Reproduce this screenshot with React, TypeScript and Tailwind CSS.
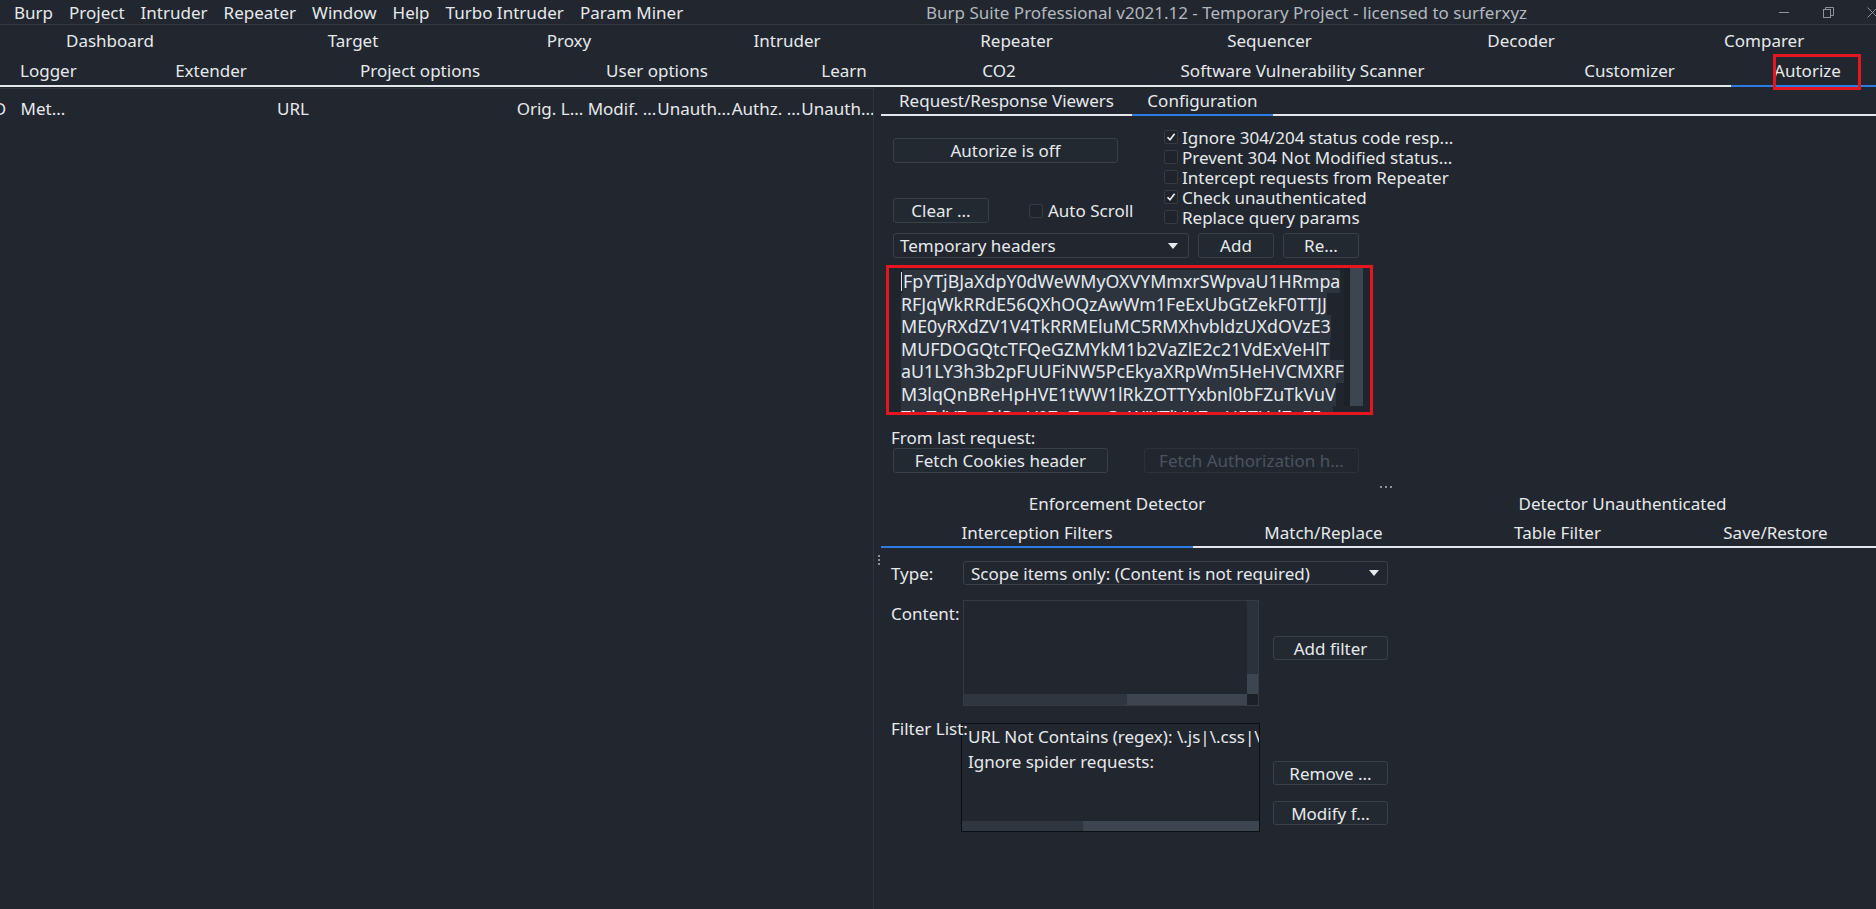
const menus = ["Burp", "Project", "Intruder", "Repeater", "Window", "Help", "Turbo Intruder", "Param Miner"];

const tabsTop = [
  { label: "Dashboard", w: "w-[220px] justify-center" },
  { label: "Target", w: "w-[266px] justify-center" },
  { label: "Proxy", w: "w-[166px] justify-center" },
  { label: "Intruder", w: "w-[270px] justify-center" },
  { label: "Repeater", w: "w-[189px] justify-center" },
  { label: "Sequencer", w: "w-[317px] justify-center" },
  { label: "Decoder", w: "w-[186px] justify-center" },
  { label: "Comparer", w: "flex-1 pl-[110px]" },
];

const tabsBottom = [
  { label: "Logger", w: "w-[129px]" },
  { label: "Extender", w: "w-[164px]" },
  { label: "Project options", w: "w-[254px]" },
  { label: "User options", w: "w-[220px]" },
  { label: "Learn", w: "w-[154px]" },
  { label: "CO2", w: "w-[156px]" },
  { label: "Software Vulnerability Scanner", w: "w-[451px]" },
  { label: "Customizer", w: "w-[203px]" },
];

const columns = [
  { label: "Met...", w: "w-[58px]" },
  { label: "URL", w: "w-[442px]" },
  { label: "Orig. L...", w: "w-[72px]" },
  { label: "Modif. ...", w: "w-[72px]" },
  { label: "Unauth...", w: "w-[72px]" },
  { label: "Authz. ...", w: "w-[72px]" },
  { label: "Unauth...", w: "w-[72px]" },
];

const options = [
  { label: "Ignore 304/204 status code resp...", checked: true },
  { label: "Prevent 304 Not Modified status...", checked: false },
  { label: "Intercept requests from Repeater", checked: false },
  { label: "Check unauthenticated", checked: true },
  { label: "Replace query params", checked: false },
];

const headerLines = [
  "FpYTjBJaXdpY0dWeWMyOXVYMmxrSWpvaU1HRmpa",
  "RFJqWkRRdE56QXhOQzAwWm1FeExUbGtZekF0TTJJ",
  "ME0yRXdZV1V4TkRRMEluMC5RMXhvbldzUXdOVzE3",
  "MUFDOGQtcTFQeGZMYkM1b2VaZlE2c21VdExVeHlT",
  "aU1LY3h3b2pFUUFiNW5PcEkyaXRpWm5HeHVCMXRF",
  "M3lqQnBReHpHVE1tWW1lRkZOTTYxbnl0bFZuTkVuV",
  "TlpTdVZmQlRwV0ZoTmpGaWJYTjVHZmU5TUdZeE5p",
];

const Btn = ({
  children,
  className = "",
  disabled = false,
}: {
  children: React.ReactNode;
  className?: string;
  disabled?: boolean;
}) => (
  <div
    className={`flex shrink-0 items-center justify-center rounded-[3px] border whitespace-nowrap ${
      disabled
        ? "border-[#2c323b] text-[#4b5361]"
        : "border-[#3a4049] bg-[#232931] text-[#e6e9ec]"
    } ${className}`}
  >
    {children}
  </div>
);

const CheckBox = ({ checked }: { checked: boolean }) => (
  <div className="flex h-[14px] w-[14px] shrink-0 items-center justify-center rounded-[2px] border border-[#363c45] bg-[#1f242b]">
    {checked && (
      <svg width="10" height="10" viewBox="0 0 10 10">
        <path d="M1.5 5.2 L4 7.8 L8.6 1.8" fill="none" stroke="#eef1f4" strokeWidth="1.6" />
      </svg>
    )}
  </div>
);

const Arrow = () => (
  <svg width="10" height="6" viewBox="0 0 10 6">
    <path d="M0 0 H10 L5 6 Z" fill="#e8ebee" />
  </svg>
);

export default function App() {
  return (
    <div className="flex h-[909px] w-[1876px] flex-col overflow-hidden bg-[#22272f] font-['Noto_Sans',sans-serif] text-[17px] leading-none text-[#e6e9ec]">
      {/* menu + title bar */}
      <div className="flex h-[25px] shrink-0 items-center border-b border-[#343a43]">
        <div className="flex pl-[6px]">
          {menus.map((m) => (
            <div key={m} className="px-[8px] whitespace-nowrap">
              {m}
            </div>
          ))}
        </div>
        <div className="flex-1 text-center whitespace-nowrap text-[#b3b8bf]">
          Burp Suite Professional v2021.12 - Temporary Project - licensed to surferxyz
        </div>
        <div className="mr-[-18px] flex h-full shrink-0">
          <div className="flex w-[44px] items-center justify-center">
            <div className="h-px w-[10px] bg-[#8d939b]" />
          </div>
          <div className="flex w-[44px] items-center justify-center">
            <svg width="11" height="11" viewBox="0 0 11 11">
              <rect x="0.5" y="2.5" width="7" height="8" fill="none" stroke="#8d939b" />
              <path d="M2.5 2.5 V0.5 H10.5 V8.5 H7.5" fill="none" stroke="#8d939b" />
            </svg>
          </div>
          <div className="flex w-[44px] items-center justify-center">
            <svg width="11" height="11" viewBox="0 0 11 11">
              <path d="M0.5 0.5 L10.5 10.5 M10.5 0.5 L0.5 10.5" stroke="#8d939b" />
            </svg>
          </div>
        </div>
      </div>

      {/* main tabs */}
      <div className="flex h-[31px] shrink-0">
        {tabsTop.map((t) => (
          <div key={t.label} className={`${t.w} flex items-center whitespace-nowrap`}>
            {t.label}
          </div>
        ))}
      </div>
      <div className="flex h-[31px] shrink-0">
        {tabsBottom.map((t, i) => (
          <div
            key={t.label}
            className={`${t.w} flex items-center border-b-2 border-[#e4e6e9] whitespace-nowrap ${
              i === 0 ? "pl-[20px]" : "justify-center"
            }`}
          >
            {t.label}
          </div>
        ))}
        <div className="relative flex flex-1 items-center justify-center border-b-2 border-[#2f7ae5] pl-[8px]">
          Autorize
          <div className="absolute top-[-2px] left-[42px] h-[36px] w-[88px] border-[3px] border-[#e5161f]" />
        </div>
      </div>

      <div className="flex min-h-0 flex-1">
        {/* results table */}
        <div className="mt-px w-[874px] shrink-0 overflow-hidden border-t border-r border-[#2f353e]">
          <div className="flex h-[38px] items-center whitespace-nowrap">
            <div className="ml-[-20px] w-[34px] shrink-0 text-center">ID</div>
            {columns.map((c, i) => (
              <div key={i} className={`${c.w} flex shrink-0 justify-center`}>
                {c.label}
              </div>
            ))}
          </div>
        </div>

        {/* configuration */}
        <div className="flex min-w-0 flex-1 flex-col pl-[7px]">
          <div className="flex h-[29px] shrink-0">
            <div className="flex w-[251px] items-center justify-center border-b-2 border-[#e4e6e9] whitespace-nowrap">
              Request/Response Viewers
            </div>
            <div className="flex w-[141px] items-center justify-center border-b-2 border-[#2f7ae5]">
              Configuration
            </div>
            <div className="flex-1 border-b-2 border-[#e4e6e9]" />
          </div>

          <div className="pl-[12px]">
            <div className="flex">
              <div className="w-[225px] shrink-0">
                <Btn className="mt-[22px] h-[25px] w-[225px]">Autorize is off</Btn>
                <div className="mt-[35px] flex items-center">
                  <Btn className="h-[25px] w-[96px]">Clear ...</Btn>
                  <div className="ml-[40px] flex shrink-0 items-center gap-[5px] whitespace-nowrap">
                    <CheckBox checked={false} />
                    Auto Scroll
                  </div>
                </div>
              </div>
              <div className="mt-[11px] ml-[46px]">
                {options.map((o) => (
                  <div key={o.label} className="flex h-[20px] items-center gap-[4px] whitespace-nowrap">
                    <CheckBox checked={o.checked} />
                    {o.label}
                  </div>
                ))}
              </div>
            </div>

            <div className="mt-[6px] flex h-[25px]">
              <div className="flex w-[296px] items-center justify-between rounded-[3px] border border-[#3a4049] pr-[10px] pl-[6px]">
                Temporary headers
                <Arrow />
              </div>
              <Btn className="ml-[9px] w-[76px]">Add</Btn>
              <Btn className="ml-[9px] w-[76px]">Re...</Btn>
            </div>

            <div className="mt-[7px] ml-[-7px] flex h-[150px] w-[487px] border-[3px] border-[#e5161f] bg-[#20252d]">
              <div className="min-w-0 flex-1 overflow-hidden pt-[2px] pl-[12px] text-[17.8px] text-[#e3e9ef]">
                {headerLines.map((l, i) => (
                  <div key={i} className="flex h-[22.6px] items-center whitespace-nowrap">
                    {i === 0 && <div className="mr-px h-[19px] w-px bg-[#e3e9ef]" />}
                    <span className="bg-[#2d343e] leading-[22.6px]">{l}</span>
                  </div>
                ))}
              </div>
              <div className="flex w-[19px] shrink-0 pb-[6px]">
                <div className="w-[6px] bg-[#1c2128]" />
                <div className="w-[13px] bg-[#3d4550]" />
              </div>
              <div className="w-[7px] shrink-0" />
            </div>

            <div className="mt-[12px] ml-[-2px] h-[21px] leading-[21px] whitespace-nowrap">From last request:</div>
            <div className="flex h-[25px]">
              <Btn className="w-[215px]">Fetch Cookies header</Btn>
              <Btn disabled className="ml-[36px] w-[215px]">
                Fetch Authorization h...
              </Btn>
            </div>
            <div className="flex h-[16px] items-end pb-[1px] pl-[487px]">
              <div className="flex gap-[3px]">
                <div className="h-[2px] w-[2px] bg-[#8c939c]" />
                <div className="h-[2px] w-[2px] bg-[#8c939c]" />
                <div className="h-[2px] w-[2px] bg-[#8c939c]" />
              </div>
            </div>
          </div>

          {/* lower tabs */}
          <div className="flex h-[29px] shrink-0 items-center whitespace-nowrap">
            <div className="w-[472px] text-center">Enforcement Detector</div>
            <div className="flex-1 pl-[16px] text-center">Detector Unauthenticated</div>
          </div>
          <div className="flex h-[30px] shrink-0 whitespace-nowrap">
            <div className="flex w-[312px] items-center justify-center border-b-2 border-[#2f7ae5]">
              Interception Filters
            </div>
            <div className="flex w-[261px] items-center justify-center border-b-2 border-[#e4e6e9]">
              Match/Replace
            </div>
            <div className="flex w-[207px] items-center justify-center border-b-2 border-[#e4e6e9]">
              Table Filter
            </div>
            <div className="flex flex-1 items-center justify-center border-b-2 border-[#e4e6e9] pl-[14px]">
              Save/Restore
            </div>
          </div>

          <div className="relative pl-[10px]">
            <div className="absolute top-[7px] left-[-3px] flex flex-col gap-[2px]">
              <div className="h-[2px] w-[2px] bg-[#8c939c]" />
              <div className="h-[2px] w-[2px] bg-[#8c939c]" />
              <div className="h-[2px] w-[2px] bg-[#8c939c]" />
            </div>

            <div className="mt-[13px] flex h-[24px] items-center">
              <div className="w-[72px] shrink-0">Type:</div>
              <div className="flex h-full w-[425px] items-center justify-between rounded-[3px] border border-[#3a4049] pr-[8px] pl-[7px] whitespace-nowrap">
                Scope items only: (Content is not required)
                <Arrow />
              </div>
            </div>

            <div className="mt-[15px] flex">
              <div className="w-[72px] shrink-0 pt-[3px] leading-[22px]">Content:</div>
              <div className="flex h-[106px] w-[296px] flex-col border border-[#343b45]">
                <div className="flex min-h-0 flex-1">
                  <div className="flex-1" />
                  <div className="flex w-[11px] flex-col bg-[#2b323b]">
                    <div className="flex-1" />
                    <div className="h-[20px] bg-[#3d4550]" />
                  </div>
                </div>
                <div className="flex h-[11px]">
                  <div className="w-[163px] bg-[#2f3640]" />
                  <div className="flex-1 bg-[#3d4550]" />
                  <div className="w-[11px] bg-[#1c2128]" />
                </div>
              </div>
              <Btn className="mt-[36px] ml-[14px] h-[24px] w-[115px]">Add filter</Btn>
            </div>

            <div className="mt-[17px] flex">
              <div className="relative z-10 mt-[-5px] w-[70px] shrink-0 leading-[22px] whitespace-nowrap">
                Filter List:
              </div>
              <div className="flex h-[109px] w-[299px] flex-col overflow-hidden border border-[#0b0e12]">
                <div className="min-h-0 flex-1 overflow-hidden pl-[6px] whitespace-nowrap">
                  <div className="h-[25px] leading-[25px]">URL Not Contains (regex): \.js|\.css|\.png|\.jpg|\.gif</div>
                  <div className="h-[25px] leading-[25px]">Ignore spider requests:</div>
                </div>
                <div className="flex h-[10px] shrink-0">
                  <div className="w-[121px] bg-[#2f3640]" />
                  <div className="flex-1 bg-[#3d4550]" />
                </div>
              </div>
              <div className="ml-[13px]">
                <Btn className="mt-[38px] h-[24px] w-[115px]">Remove ...</Btn>
                <Btn className="mt-[16px] h-[24px] w-[115px]">Modify f...</Btn>
              </div>
            </div>
          </div>
        </div>
      </div>
    </div>
  );
}
